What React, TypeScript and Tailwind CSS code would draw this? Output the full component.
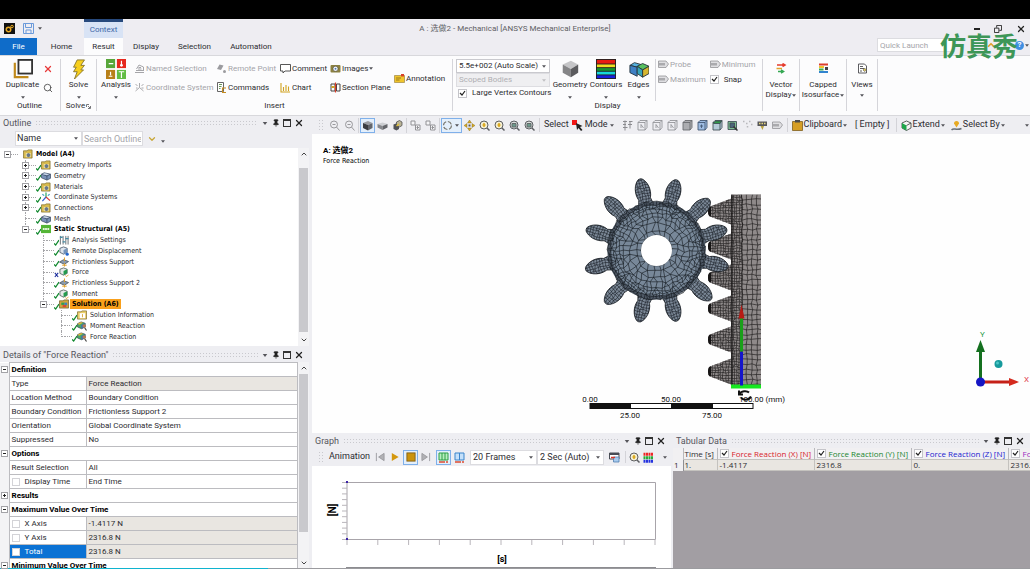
import { useState, type ReactNode } from "react";
import { ChevronDown, Pin, Search, X } from "lucide-react";

type IconProps = { name: string; className?: string };

const svgs: Record<string, ReactNode> = {
  duplicate: (
    <>
      <path d="M2 4v16h15" fill="none" stroke="#c08a1c" strokeWidth="2.4" />
      <rect x="6" y="1" width="15" height="15" fill="#fff" stroke="#333" strokeWidth="2" />
    </>
  ),
  bolt: <path d="M9 1h8l-4 6h4l-4 5h3L6 22l3-8H5l3-5H5z" fill="#f7cf1d" stroke="#86742a" strokeWidth="1" />,
  analysis: (
    <>
      <rect x="0" y="0" width="10" height="10" fill="#58a63a" />
      <rect x="12" y="0" width="10" height="10" fill="#e6281e" />
      <rect x="0" y="12" width="10" height="10" fill="#b8801a" />
      <rect x="12" y="12" width="10" height="10" fill="#63bd45" />
      <path d="M3 5h5M17 2v5M3 19h4M5 14v4M14 14h6M17 14v7" stroke="#fff" strokeWidth="1.3" />
      <circle cx="17" cy="7" r="1.6" fill="#fff" />
    </>
  ),
  geometry: (
    <>
      <path d="M3 6 12 2l8 4-8 5z" fill="#c5c5c7" />
      <path d="M3 6v9l9 5v-9z" fill="#858587" />
      <path d="M20 6v9l-8 5v-9z" fill="#5b5b5e" />
    </>
  ),
  contours: (
    <>
      <rect width="22" height="22" fill="#222" />
      <path d="M1 3h20" stroke="#e81c12" strokeWidth="4" />
      <path d="M1 7.5h20" stroke="#f0e021" strokeWidth="3" />
      <path d="M1 11.5h20" stroke="#17952f" strokeWidth="3" />
      <path d="M1 15.5h20" stroke="#17d7dc" strokeWidth="3" />
      <path d="M1 19.5h20" stroke="#1820dd" strokeWidth="3" />
    </>
  ),
  edges: (
    <g stroke="#26353e" strokeWidth="1">
      <path d="m1 7 5-3 7 2-4 3z" fill="#55b0dc" />
      <path d="M1 7v8l8 4V9z" fill="#3f80c4" />
      <path d="m9 8 6-3 7 3-7 4z" fill="#58c060" />
      <path d="M9 8v8l6 4v-8z" fill="#36a5b8" />
      <path d="m15 12 7-4v8l-7 4z" fill="#d7b62e" />
    </g>
  ),
  tag: (
    <g fill="none" stroke="#9b9b9f" strokeWidth="1.8">
      <path d="M2 19h18M4 15h14M5 12l5-8 9 4v8" />
      <path d="M9 9h5M8 12h7" />
    </g>
  ),
  axes: (
    <g fill="none" stroke="#a1a1a5" strokeWidth="1.8">
      <path d="M11 11V2M11 11 3 18M11 11l8 7M3 4l4 4M19 4l-4 4M4 12h3M15 12h4" />
    </g>
  ),
  remote: (
    <g fill="#9b9b9f">
      <path d="m2 12 5-9 8 2-5 9z" />
      <circle cx="17" cy="17" r="3" />
    </g>
  ),
  commands: (
    <g fill="none" strokeWidth="1.8">
      <path d="M3 1h12v18H3z" fill="#fff" stroke="#555" />
      <path d="M6 5h6M6 9h5M6 13h3" stroke="#5a8b47" />
      <path d="M20 12h-7v9h7" stroke="#c58b20" strokeWidth="2.2" />
    </g>
  ),
  comment: <path d="M1 3h20v13H10l-4 4v-4H1z" fill="#fff" stroke="#444" strokeWidth="1.8" />,
  chart: <path d="M2 2v18h18M7 18v-8M12 18V6M17 18v-9" fill="none" stroke="#d0a220" strokeWidth="2.2" />,
  images: (
    <>
      <rect x="1" y="4" width="20" height="15" rx="2" fill="#8b8141" />
      <circle cx="11" cy="11.5" r="5" fill="#fff" stroke="#333" />
      <circle cx="11" cy="11.5" r="2" fill="#4c77b2" />
    </>
  ),
  section: (
    <>
      <path d="M2 4h8v14H2zM13 4h7v14h-7z" fill="none" stroke="#444" strokeWidth="2" />
      <path d="M11 1v20" stroke="#dc3e28" strokeWidth="2.4" />
      <path d="M3 10h6" stroke="#d0a220" strokeWidth="4" />
    </>
  ),
  annotation: (
    <>
      <path d="M1 5h20v14H1z" fill="#f0c52c" stroke="#7e6720" />
      <path d="M4 10h10M4 14h7" stroke="#7b6219" strokeWidth="1.5" />
      <path d="M14 2h6v5h-6z" fill="#d8412a" />
    </>
  ),
  probe: (
    <>
      <path d="M1 4h15l5 6-5 7H1z" fill="#dedee1" stroke="#8d8d91" strokeWidth="1.5" />
      <path d="M4 8v5M8 8v5M12 8v5" stroke="#77777b" strokeWidth="2" />
    </>
  ),
  vector: (
    <g fill="none" strokeWidth="3">
      <path d="M2 4h14m-3-3 5 3-5 3" stroke="#e53b2c" />
      <path d="M1 11h11" stroke="#e2a32b" />
      <path d="M4 17h9m-3-3 5 3-5 3" stroke="#35a853" />
    </g>
  ),
  isosurface: (
    <>
      <path d="M2 3h18" stroke="#dc3d2c" strokeWidth="4" />
      <path d="M2 8h10" stroke="#f0c32b" strokeWidth="4" />
      <path d="M2 13h9" stroke="#3baa54" strokeWidth="4" />
      <path d="M2 18h18" stroke="#3284cf" strokeWidth="4" />
      <path d="M14 8h6v6h-6z" fill="#444" />
    </>
  ),
  views: (
    <g fill="#fff" stroke="#4b4b4f" strokeWidth="1.8">
      <path d="M3 2h12l4 4v14H3z" />
      <path d="M6 7h6M6 11h8M6 16h4" />
      <path d="m12 14 3-4 4 4-4 3z" fill="#d9c25a" strokeWidth="1" />
    </g>
  ),
  zoom: (
    <g fill="none" stroke="#99999d" strokeWidth="2">
      <circle cx="10" cy="9" r="7" />
      <path d="m15 14 6 7M7 9h6" />
    </g>
  ),
  zoomBox: (
    <g fill="none" stroke="#5d5f63" strokeWidth="2">
      <circle cx="10" cy="10" r="8" fill="#f5efd2" />
      <path d="m16 16 5 5" strokeWidth="3" />
      <path d="M7 10h6M10 6v8" stroke="#d9a617" strokeWidth="3" />
    </g>
  ),
  zoomFit: (
    <g fill="none" stroke="#5d5f63" strokeWidth="2">
      <circle cx="10" cy="10" r="8" fill="#d9dfdd" />
      <path d="m16 16 5 5" strokeWidth="3" />
      <path d="M6 7h8v7H6z" fill="#6c9a8b" stroke="#63696a" />
    </g>
  ),
  solid: (
    <>
      <path d="m2 6 10-4 9 4-9 4z" fill="#9a9ca1" />
      <path d="M2 6v10l10 5V10z" fill="#3b3d42" />
      <path d="m21 6-9 4v11l9-5z" fill="#63666c" />
    </>
  ),
  plate: (
    <>
      <path d="m1 8 10-3 10 3-10 4z" fill="#ccced2" />
      <path d="M1 8v7l10 5v-8z" fill="#85878c" />
      <path d="m21 8-10 4v8l10-5z" fill="#63656a" />
    </>
  ),
  rotateBox: (
    <>
      <path d="M3 9 8 7l6 3v8l-5 3-6-3z" fill="#505257" />
      <path d="m9 4 6-3 5 3v7l-5 3-6-3z" fill="#b9b396" stroke="#4c4c4c" strokeWidth="1.5" />
      <path d="m9 12 5-4" stroke="#e0bd35" strokeWidth="3" />
    </>
  ),
  copyBox: (
    <g fill="#f5f5f7" stroke="#929296" strokeWidth="2">
      <path d="M2 2h8v8H2zM11 10h9v10h-9z" />
      <path d="M13 15h5M15 12v6" />
    </g>
  ),
  rotate: <circle cx="11" cy="11" r="8" fill="none" stroke="#75736a" strokeWidth="2.4" strokeDasharray="9 3.5" />,
  pan: (
    <>
      <path d="m11 0 4 6H7zM11 22l4-6H7zM0 11l6-4v8zM22 11l-6-4v8z" fill="#d9a91a" stroke="#7b6828" strokeWidth=".8" />
      <path d="M9 9h4v4H9z" fill="#555" />
    </>
  ),
  mode: (
    <>
      <path d="M0 0h10v10H0z" fill="#f01616" />
      <path d="m8 6 13 6-5 2 5 6-3 2-5-6-3 4z" fill="#222" />
    </>
  ),
  selectGrid: (
    <g fill="none" stroke="#8b8b8f" strokeWidth="2">
      <path d="M2 3h8M14 3h7M2 9h6M12 9h8M2 15h9M6 1v20M16 3v14" />
    </g>
  ),
  cubeLine: (
    <g fill="none" stroke="#8f9095" strokeWidth="1.7">
      <path d="M2 5 6 1h14v14l-4 5H2zM2 5h14v15M16 5l4-4" />
      <path d="m8 9 5 7M8 9v7" />
    </g>
  ),
  cubeDark: (
    <g fill="#acadb1" stroke="#67686d" strokeWidth="1.7">
      <path d="M2 5 6 1h14v14l-4 5H2zM2 5h14v15M16 5l4-4" />
    </g>
  ),
  cubeBlue: (
    <g fill="#9dbbe2" stroke="#3f536f" strokeWidth="1.7">
      <path d="M2 5 6 1h14v14l-4 5H2zM2 5h14v15M16 5l4-4M6 12h6M9 9v7" />
    </g>
  ),
  cubeGreen: (
    <g fill="#b5cbd9" stroke="#3d4c54" strokeWidth="1.7">
      <path d="M2 5 6 1h14v14l-4 5H2zM2 5h14v15M16 5l4-4" />
      <path d="M3 6 7 2h12l-3 5H3z" fill="#309b4a" />
    </g>
  ),
  cubeMesh: (
    <g fill="#7dbf93" stroke="#3d4c54" strokeWidth="1.7">
      <path d="M2 3h17v16H2z" />
      <path d="M6 6h9v9H6z" fill="#4b657a" />
      <path d="m13 13 8 8" stroke="#333" strokeWidth="3" />
    </g>
  ),
  dots: <path d="M2 3h3M8 7h3M14 3h3M11 12v3M18 9h3" stroke="#b8b8bc" strokeWidth="3" />,
  label: (
    <>
      <path d="M1 3h19v9H1z" fill="#57575a" />
      <path d="m7 12 4 8 3-8" fill="#b9a23f" />
      <path d="M4 7h3M9 7h3M14 7h3" stroke="#e6d780" strokeWidth="3" />
    </>
  ),
  clipboard: (
    <>
      <path d="M1 3h20v18H1z" fill="#d69e24" stroke="#795816" strokeWidth="1.5" />
      <path d="M6 0h10v5H6z" fill="#4d4d4d" />
    </>
  ),
  extend: (
    <>
      <path d="m2 6 9-4 9 4v10l-9 5-9-5z" fill="#f5f5f5" stroke="#3d4440" strokeWidth="1.7" />
      <path d="m2 6 9 5v10l-9-5z" fill="#1da64a" />
      <path d="m11 11 9-5" stroke="#3d4440" strokeWidth="1.7" />
    </>
  ),
  selectBy: (
    <>
      <path d="M11 15 6 7a5 5 0 1 1 10 0z" fill="#e7aa23" />
      <path d="M1 20c5-6 8 2 20-3" fill="none" stroke="#68707a" strokeWidth="3" />
    </>
  ),
  folder: (
    <>
      <path d="M1 4h8l2-2h9v18H1z" fill="#d8bb50" stroke="#816e2b" strokeWidth="1.6" />
      <path d="M6 9h11v9H6z" fill="#f6e7a7" />
      <path d="m8 11 4-2 4 2v5l-4 2-4-2z" fill="#67778a" />
    </>
  ),
  part: (
    <>
      <path d="m1 7 6-3 14 3v9l-8 4-12-5z" fill="#7891b8" stroke="#384860" strokeWidth="1.6" />
      <path d="m1 7 12 4 8-4M13 11v9" fill="none" stroke="#384860" strokeWidth="1.6" />
      <path d="m3 7 5-2 10 2-5 2z" fill="#d5dfef" />
    </>
  ),
  csys: (
    <g fill="none" strokeWidth="2.6">
      <path d="M11 11V1" stroke="#28a55b" />
      <path d="M11 11 3 20" stroke="#3462cf" />
      <path d="m11 11 9 8" stroke="#da3836" />
      <path d="m3 5 4 3M19 5l-4 3" stroke="#3da1c5" />
    </g>
  ),
  static: (
    <>
      <rect y="2" width="22" height="18" fill="#54b536" />
      <path d="M4 11h14" stroke="#e3f4dc" strokeWidth="4" strokeDasharray="4 1" />
    </>
  ),
  settings: (
    <g stroke="#4e565c" strokeWidth="1.8">
      <path d="M3 2v19M9 2v19M15 2v19M20 2v19" />
      <path d="M2 5h6M8 15h6M14 8h7" stroke="#428aa3" strokeWidth="3" />
    </g>
  ),
  displacement: (
    <>
      <path d="m2 5 8-3 8 3v9l-8 4-8-4z" fill="#dee5ee" stroke="#4c596a" strokeWidth="1.8" />
      <path d="m10 9 8-4v9l-8 4z" fill="#7594bb" />
      <circle cx="18" cy="18" r="3.5" fill="#2467ce" />
    </>
  ),
  support: (
    <>
      <path d="m1 11 9-5 11 4-9 6z" fill="#8b9cae" stroke="#46525f" strokeWidth="1.7" />
      <path d="M12 1v8M12 14v7M7 18h10" stroke="#e0a02b" strokeWidth="2.2" />
    </>
  ),
  force: (
    <>
      <path d="m2 5 8-3 8 3v9l-8 4-8-4z" fill="#e6e9e8" stroke="#52605c" strokeWidth="1.8" />
      <path d="m10 9 8-4v9l-8 4z" fill="#249b4d" />
      <path d="m14 19 3 2 4-4" fill="none" stroke="#e0a02b" strokeWidth="2" />
    </>
  ),
  solution: (
    <>
      <path d="M1 4h8l2-2h10v18H1z" fill="#d0a63e" stroke="#75602d" strokeWidth="1.6" />
      <path d="M5 8h7v5H5z" fill="#2f9e50" />
      <path d="M12 8h6v6h-6z" fill="#3d83c1" />
      <path d="M8 13h8v5H8z" fill="#d84c35" />
    </>
  ),
  reaction: (
    <>
      <path d="m1 6 8-4 9 3v8l-8 4-9-4z" fill="#46a866" stroke="#36434c" strokeWidth="1.5" />
      <path d="m9 9 9-4v8l-8 4z" fill="#426fb3" />
      <path d="m1 6 8-4 4 2-8 4z" fill="#dfb13c" />
      <circle cx="16" cy="11" r="4" fill="#b77b52" />
      <path d="m17 15 4 6" stroke="#444" strokeWidth="2.5" />
    </>
  ),
  page: (
    <>
      <path d="M1 4h8l2-2h10v18H1z" fill="#e9ce69" stroke="#816e2b" strokeWidth="1.6" />
      <path d="M6 7h12v11H6z" fill="#fff" />
      <path d="M12 9v7" stroke="#d6a52c" strokeWidth="2" />
    </>
  ),
  prev: <path d="M3 2v18M20 3v16L8 11z" fill="#b1b1b5" stroke="#9b9b9f" strokeWidth="2" />,
  play: <path d="m4 2 15 9L4 20z" fill="#d4980f" />,
  stop: <rect x="2" y="2" width="18" height="18" fill="#cb930d" stroke="#806119" strokeWidth="2" />,
  next: <path d="M19 2v18M2 3v16l12-8z" fill="#b1b1b5" stroke="#9b9b9f" strokeWidth="2" />,
  greenBars: (
    <>
      <path d="M2 2h18v14H2zM8 2v14M14 2v14" fill="#b9efbf" stroke="#2d9e45" strokeWidth="2" />
      <path d="M2 20h12M16 20h4" stroke="#dc4b32" strokeWidth="3" />
    </>
  ),
  blueBars: (
    <>
      <path d="M2 2h18v14H2zM11 2v14" fill="#c4e0fa" stroke="#3b85cc" strokeWidth="2" />
      <path d="M2 20h12M16 20h4" stroke="#dc4b32" strokeWidth="3" />
    </>
  ),
  exportVideo: (
    <>
      <path d="M1 2h19v12H1z" fill="#fff" stroke="#484c55" strokeWidth="2" />
      <path d="M1 4h19" stroke="#484c55" strokeWidth="4" />
      <path d="M9 10h11v10H9z" fill="#a8cbee" stroke="#4b79ac" strokeWidth="1.5" />
      <path d="M4 11h8" stroke="#d8382b" strokeWidth="3" />
    </>
  ),
  palette: (
    <g strokeWidth="3" strokeDasharray="4 1">
      <path d="M1 3h20M1 6h20" stroke="#ef2727" />
      <path d="M1 10h20M1 13h20" stroke="#28ad37" />
      <path d="M1 17h20M1 20h20" stroke="#2533df" />
    </g>
  ),
};

function Icon({ name, className = "size-[11px]" }: IconProps) {
  return (
    <svg viewBox="0 0 22 22" className={`shrink-0 ${className}`} aria-hidden="true">
      {svgs[name]}
    </svg>
  );
}

function Caret({ className = "" }: { className?: string }) {
  return (
    <svg viewBox="0 0 6 4" className={`h-[3px] w-1 shrink-0 ${className}`} aria-hidden="true">
      <path d="M0 0h6L3 4z" fill="#55555a" />
    </svg>
  );
}

function Divider() {
  return <div className="mx-px w-px self-stretch bg-[#d5d5da]" />;
}

function BigButton({ icon, label, className = "" }: { icon: string; label: string; className?: string }) {
  return (
    <button className={`flex flex-col items-center ${className}`}>
      <Icon name={icon} className="size-5" />
      <span className="leading-[11px]">{label}</span>
      <Caret className="mt-1.5" />
    </button>
  );
}

function SmallButton({ icon, label, muted, menu }: { icon: string; label: string; muted?: boolean; menu?: boolean }) {
  return (
    <button disabled={muted} className="flex h-[11px] items-center gap-px whitespace-nowrap disabled:text-[#a4a4a9]">
      <Icon name={icon} />
      {label}
      {menu && <Caret />}
    </button>
  );
}

function GroupLabel({ children }: { children: ReactNode }) {
  return <div className="flex items-end justify-center leading-[10px]">{children}</div>;
}

function Ribbon() {
  const [contours, setContours] = useState(true);
  const [snap, setSnap] = useState(true);

  return (
    <section className="flex h-[61px] shrink-0 border-y border-[#d8d8dc] bg-[#fcfcfd] pt-[3px] pb-1">
      <div className="flex w-[59px] flex-col">
        <div className="flex flex-1 items-start gap-0.5 pl-1">
          <BigButton icon="duplicate" label="Duplicate" className="w-[37px]" />
          <div className="flex flex-col items-center gap-[9px] pt-[5px]">
            <button aria-label="Delete">
              <X className="size-2.5 text-[#e83a3a]" strokeWidth={3} />
            </button>
            <button aria-label="Find">
              <Search className="size-2.5 text-[#444]" />
            </button>
          </div>
        </div>
        <GroupLabel>Outline</GroupLabel>
      </div>
      <Divider />
      <div className="flex w-[33px] flex-col">
        <div className="flex flex-1 items-start justify-center">
          <BigButton icon="bolt" label="Solve" />
        </div>
        <GroupLabel>
          Solve
          <svg viewBox="0 0 5 5" className="mb-0.5 ml-px size-[5px]" fill="none" stroke="#77777b">
            <path d="M.5 3V.5H3M2 2l2 2M4.500 2v2.500H2" />
          </svg>
        </GroupLabel>
      </div>
      <Divider />
      <div className="flex w-[353px] flex-col">
        <div className="flex flex-1 items-start">
          <BigButton icon="analysis" label="Analysis" className="w-[36px]" />
          <div className="flex flex-1 gap-1 pt-1">
            <div className="flex w-[78px] flex-col gap-2">
              <SmallButton icon="tag" label="Named Selection" muted />
              <SmallButton icon="axes" label="Coordinate System" muted />
            </div>
            <div className="flex w-[60px] flex-col gap-2">
              <SmallButton icon="remote" label="Remote Point" muted />
              <SmallButton icon="commands" label="Commands" />
            </div>
            <div className="flex w-[46px] flex-col gap-2">
              <SmallButton icon="comment" label="Comment" />
              <SmallButton icon="chart" label="Chart" />
            </div>
            <div className="flex w-[60px] flex-col gap-2">
              <SmallButton icon="images" label="Images" menu />
              <SmallButton icon="section" label="Section Plane" />
            </div>
            <div className="pt-2.5">
              <SmallButton icon="annotation" label="Annotation" />
            </div>
          </div>
        </div>
        <GroupLabel>Insert</GroupLabel>
      </div>
      <Divider />
      <div className="flex w-[307px] flex-col">
        <div className="flex flex-1 items-start">
          <div className="flex w-[96px] flex-col pl-0.5">
            <div className="relative">
              <select
                aria-label="Result scale"
                className="h-[14px] w-full appearance-none border border-[#c9c9ce] bg-white px-0.5 leading-[12px]"
              >
                <option>5.5e+002 (Auto Scale)</option>
              </select>
              <Caret className="absolute top-1.5 right-1" />
            </div>
            <div className="relative">
              <select
                aria-label="Scoping"
                disabled
                className="h-[14px] w-full appearance-none border border-[#dddde1] bg-[#efeff1] px-0.5 leading-[12px] text-[#b0b0b4] opacity-100"
              >
                <option>Scoped Bodies</option>
              </select>
              <Caret className="absolute top-1.5 right-1 opacity-30" />
            </div>
            <label className="flex items-center gap-[5px] pl-0.5 leading-[12px] whitespace-nowrap">
              <Tick checked={contours} onChange={setContours} />
              Large Vertex Contours
            </label>
          </div>
          <div className="flex pl-0.5">
            <BigButton icon="geometry" label="Geometry" className="w-[36px]" />
            <BigButton icon="contours" label="Contours" className="w-[36px]" />
            <BigButton icon="edges" label="Edges" className="w-[29px]" />
          </div>
          <div className="mx-0.5 h-[42px] w-px bg-[#d5d5da]" />
          <div className="flex flex-col gap-1">
            <SmallButton icon="probe" label="Probe" muted />
            <SmallButton icon="probe" label="Maximum" muted />
          </div>
          <div className="flex flex-col gap-1 pl-1">
            <SmallButton icon="probe" label="Minimum" muted />
            <label className="flex h-[11px] items-center gap-[5px]">
              <Tick checked={snap} onChange={setSnap} />
              Snap
            </label>
          </div>
        </div>
        <GroupLabel>Display</GroupLabel>
      </div>
      <Divider />
      <TallButton icon="vector" lines={["Vector", "Display"]} className="w-[34px]" />
      <Divider />
      <TallButton icon="isosurface" lines={["Capped", "Isosurface"]} className="w-[44px]" />
      <Divider />
      <TallButton icon="views" lines={["Views", ""]} className="w-[28px]" />
      <Divider />
    </section>
  );
}

function TallButton({ icon, lines, className }: { icon: string; lines: string[]; className: string }) {
  return (
    <button className={`flex flex-col items-center pt-1 leading-[10px] whitespace-nowrap ${className}`}>
      <Icon name={icon} />
      <span className="mt-1.5">{lines[0]}</span>
      <span className="flex h-2.5 items-center gap-px">
        {lines[1]}
        <Caret />
      </span>
    </button>
  );
}

function Tick({ checked, onChange, label }: { checked: boolean; onChange: (v: boolean) => void; label?: string }) {
  return (
    <span className="relative flex size-[9px] shrink-0">
      <input
        type="checkbox"
        aria-label={label}
        checked={checked}
        onChange={(e) => onChange(e.target.checked)}
        className="size-[9px] appearance-none border border-[#c4c4c9] bg-white"
      />
      {checked && (
        <svg viewBox="0 0 9 9" className="pointer-events-none absolute inset-0 size-[9px]">
          <path d="m2 4 2 2 3-4" fill="none" stroke="#222" strokeWidth="1.2" />
        </svg>
      )}
    </span>
  );
}

function PanelHeader({ title }: { title: string }) {
  return (
    <header className="flex h-[14px] shrink-0 items-center gap-1 bg-[#eeeef2] pr-[5px] pl-[3px] text-[#55555c]">
      <h2 className="text-[9px] leading-[14px] whitespace-nowrap">{title}</h2>
      <div className="h-[6px] flex-1 bg-[radial-gradient(#c9c9ce_1px,transparent_1px)] bg-[length:3px_3px]" />
      <div className="flex items-center gap-[3px] text-[#222]">
        <button aria-label={`${title} menu`} className="mr-px">
          <Caret className="w-1.5" />
        </button>
        <button aria-label={`Pin ${title}`}>
          <Pin className="size-2 fill-current" />
        </button>
        <button aria-label={`Maximize ${title}`} className="size-2 border border-t-2 border-[#333]" />
        <button aria-label={`Close ${title}`}>
          <X className="size-2.5" strokeWidth={3} />
        </button>
      </div>
    </header>
  );
}

type TreeNode = {
  label: string;
  level: number;
  icon: string;
  toggle?: "+" | "-";
  state?: "ok" | "off";
  last?: boolean;
};

const tree: TreeNode[] = [
  { label: "Model (A4)", level: 0, icon: "folder", toggle: "-" },
  { label: "Geometry Imports", level: 1, icon: "folder", toggle: "+", state: "ok" },
  { label: "Geometry", level: 1, icon: "part", toggle: "+", state: "ok" },
  { label: "Materials", level: 1, icon: "folder", toggle: "+", state: "ok" },
  { label: "Coordinate Systems", level: 1, icon: "csys", toggle: "+", state: "ok" },
  { label: "Connections", level: 1, icon: "folder", toggle: "+", state: "ok" },
  { label: "Mesh", level: 1, icon: "part", state: "ok" },
  { label: "Static Structural (A5)", level: 1, icon: "static", toggle: "-", state: "ok", last: true },
  { label: "Analysis Settings", level: 2, icon: "settings", state: "ok" },
  { label: "Remote Displacement", level: 2, icon: "displacement", state: "ok" },
  { label: "Frictionless Support", level: 2, icon: "support", state: "ok" },
  { label: "Force", level: 2, icon: "force", state: "off" },
  { label: "Frictionless Support 2", level: 2, icon: "support", state: "ok" },
  { label: "Moment", level: 2, icon: "force", state: "ok" },
  { label: "Solution (A6)", level: 2, icon: "solution", toggle: "-", state: "ok", last: true },
  { label: "Solution Information", level: 3, icon: "page", state: "ok" },
  { label: "Moment Reaction", level: 3, icon: "reaction", state: "ok" },
  { label: "Force Reaction", level: 3, icon: "reaction", state: "ok", last: true },
];

const indents = ["pl-1", "pl-[22px]", "pl-10", "pl-[58px]"];
const guides = ["left-[7px]", "left-[25px]", "left-[43px]", "left-[61px]"];

function Toggle({ sign, label }: { sign: "+" | "-"; label: string }) {
  return (
    <button
      aria-label={label}
      className="relative z-10 flex size-[7px] shrink-0 items-center justify-center border border-[#a3a3a7] bg-white"
    >
      <svg viewBox="0 0 5 5" className="size-[5px] shrink-0">
        <path d={sign === "+" ? "M1 2.5h3M2.5 1v3" : "M1 2.5h3"} stroke="#222" />
      </svg>
    </button>
  );
}

function TreeRow({ node }: { node: TreeNode }) {
  const bold = node.label.endsWith(")");
  const selected = node.icon === "solution";

  return (
    <li className={`relative flex min-h-0 flex-1 items-center ${indents[node.level]}`}>
      {node.level > 0 && (
        <span
          className={`absolute top-0 border-l border-dotted border-[#a5a5a8] ${guides[node.level]} ${
            node.last ? "h-1/2" : "h-full"
          }`}
        />
      )}
      {node.toggle ? (
        <Toggle sign={node.toggle} label={`Toggle ${node.label}`} />
      ) : (
        <span className="ml-[3px] w-1 border-t border-dotted border-[#a5a5a8]" />
      )}
      <span className="w-[7px] border-t border-dotted border-[#a5a5a8]" />
      <svg viewBox="0 0 6 8" className="mt-1 h-[7px] w-[5px] shrink-0">
        {node.state === "ok" && <path d="m0 5 2 2 4-6" fill="none" stroke="#12892f" strokeWidth="1.5" />}
        {node.state === "off" && <path d="m1 2 4 5M5 2 1 7" fill="none" stroke="#1a2d9c" strokeWidth="1.3" />}
      </svg>
      <Icon name={node.icon} className="size-2.5" />
      <span
        className={`ml-px px-0.5 leading-[10px] whitespace-nowrap ${bold ? "font-bold text-black" : ""} ${
          selected ? "bg-[#f9a01b]" : ""
        }`}
      >
        {node.label}
      </span>
    </li>
  );
}

function ScrollBar({ thumb }: { thumb: string }) {
  return (
    <div className="flex w-[11px] shrink-0 flex-col items-center bg-[#f3f3f5] text-[#444]">
      <ChevronDown className="my-0.5 size-2 rotate-180" strokeWidth={3} />
      <div className={`w-[9px] bg-[#c9c9cd] ${thumb}`} />
      <div className="flex-1" />
      <ChevronDown className="mb-0.5 size-2" strokeWidth={3} />
    </div>
  );
}

function OutlinePanel() {
  const [query, setQuery] = useState("");

  return (
    <section className="flex flex-col">
      <PanelHeader title="Outline" />
      <div className="flex h-[18px] items-center bg-[#eeeef2] pb-px pl-[15px]">
        <div className="relative">
          <select
            aria-label="Search by"
            className="h-[15px] w-[67px] appearance-none border border-[#dcdce0] bg-white px-px text-[9px] leading-[13px]"
          >
            <option>Name</option>
          </select>
          <Caret className="absolute top-1.5 right-1" />
        </div>
        <input
          aria-label="Search Outline"
          placeholder="Search Outline"
          value={query}
          onChange={(e) => setQuery(e.target.value)}
          className="h-[15px] w-[61px] border border-[#dcdce0] bg-white px-px text-[9px] placeholder:text-[#a5a5aa]"
        />
        <button aria-label="Next match" className="ml-1">
          <ChevronDown className="size-2.5 text-[#c8a637]" strokeWidth={3} />
        </button>
        <button aria-label="Outline options" className="mt-1.5 ml-1">
          <Caret />
        </button>
      </div>
      <div className="flex h-[198px] bg-white">
        <ul className="flex flex-1 flex-col pt-px pb-1 font-['DejaVu_Sans_Condensed','Noto_Sans',sans-serif] text-[7px]">
          {tree.map((node) => (
            <TreeRow key={node.label} node={node} />
          ))}
        </ul>
        <ScrollBar thumb="mt-2 h-[164px]" />
      </div>
    </section>
  );
}

type Detail = { name: string; value?: string; sign?: "+" | "-"; box?: boolean; fixed?: boolean; active?: boolean };

const details: Detail[] = [
  { name: "Definition", sign: "-" },
  { name: "Type", value: "Force Reaction", fixed: true },
  { name: "Location Method", value: "Boundary Condition" },
  { name: "Boundary Condition", value: "Frictionless Support 2" },
  { name: "Orientation", value: "Global Coordinate System" },
  { name: "Suppressed", value: "No" },
  { name: "Options", sign: "-" },
  { name: "Result Selection", value: "All" },
  { name: "Display Time", value: "End Time", box: true },
  { name: "Results", sign: "+" },
  { name: "Maximum Value Over Time", sign: "-" },
  { name: "X Axis", value: "-1.4117 N", box: true, fixed: true },
  { name: "Y Axis", value: "2316.8 N", box: true, fixed: true },
  { name: "Total", value: "2316.8 N", box: true, fixed: true, active: true },
  { name: "Minimum Value Over Time", sign: "-" },
];

function DetailsPanel() {
  return (
    <section className="flex min-h-0 flex-1 flex-col">
      <PanelHeader title={'Details of "Force Reaction"'} />
      <div className="flex min-h-0 flex-1 bg-white">
        <div className="min-w-0 flex-1 overflow-hidden">
          <table className="w-full table-fixed border-collapse">
            <colgroup>
              <col className="w-[9px]" />
              <col className="w-[77px]" />
              <col />
            </colgroup>
            <tbody>
              {details.map((row) => (
                <tr key={row.name} className="h-[14px]">
                  <td className="bg-[#f3f3f5] p-0">
                    {row.sign && (
                      <div className="pl-px">
                        <Toggle sign={row.sign} label={`Toggle ${row.name}`} />
                      </div>
                    )}
                  </td>
                  {row.sign ? (
                    <th
                      colSpan={2}
                      className="border border-[#bcbcc0] p-0 pl-0.5 text-left leading-[13px] font-bold text-black"
                    >
                      {row.name}
                    </th>
                  ) : (
                    <>
                      <th
                        className={`border border-[#bcbcc0] p-0 pl-0.5 text-left leading-[13px] font-normal whitespace-nowrap ${
                          row.active ? "bg-[#0b72d4] text-white" : ""
                        }`}
                      >
                        {row.box ? (
                          <label className="flex items-center gap-[5px]">
                            <input
                              type="checkbox"
                              className="size-2 appearance-none border border-[#d3d3d7] bg-white"
                            />
                            {row.name}
                          </label>
                        ) : (
                          row.name
                        )}
                      </th>
                      <td
                        className={`border border-[#bcbcc0] p-0 pl-0.5 leading-[13px] ${row.fixed ? "bg-[#e9e6e1]" : ""}`}
                      >
                        {row.value}
                      </td>
                    </>
                  )}
                </tr>
              ))}
            </tbody>
          </table>
        </div>
        <ScrollBar thumb="h-[158px]" />
      </div>
    </section>
  );
}

const tools = [
  ["zoom", "zoom"],
  ["*solid", "plate", "rotateBox"],
  ["copyBox", "copyBox"],
  ["*rotate", "pan", "zoomBox", "zoomBox", "zoomFit", "zoomFit"],
];

const filters = [
  "selectGrid",
  "cubeLine",
  "cubeLine",
  "cubeLine",
  "cubeDark",
  "cubeBlue",
  "cubeGreen",
  "cubeMesh",
  "dots",
  "label",
  "probe",
];

function Grip() {
  return <div className="h-3 w-1.5 shrink-0 bg-[radial-gradient(#c9c9ce_1px,transparent_1px)] bg-[length:3px_3px]" />;
}

function GraphicsToolbar() {
  return (
    <div className="flex h-[18px] shrink-0 items-center bg-[#eeeef2] pl-[6px] text-[9px] whitespace-nowrap">
      <Grip />
      <div className="flex items-center pl-[3px]">
        {tools.map((group, g) => (
          <div key={g} className={`flex items-center ${g > 0 ? "ml-px border-l border-[#d3d3d8] pl-px" : ""}`}>
            {group.map((item, i) => {
              const active = item.startsWith("*");
              const name = item.replace("*", "");
              return (
                <button
                  key={i}
                  aria-label={name}
                  className={`flex h-[15px] min-w-[15px] items-center justify-center ${
                    active ? "border border-[#7fb0ea] bg-[#e4effb]" : ""
                  }`}
                >
                  <Icon name={name} />
                  {name === "rotate" && <Caret className="mx-0.5" />}
                </button>
              );
            })}
          </div>
        ))}
      </div>
      <div className="ml-0.5 flex items-center border-l border-[#d3d3d8] pl-1">
        <span>Select</span>
        <button className="ml-[3px] flex items-center gap-0.5">
          <Icon name="mode" />
          Mode
          <Caret />
        </button>
      </div>
      <div className="ml-1.5 flex items-center">
        {filters.map((name, i) => (
          <button key={i} aria-label={`Filter ${i + 1}`} className="flex w-[15px] justify-center">
            <Icon name={name} />
          </button>
        ))}
      </div>
      <div className="ml-0.5 flex items-center gap-2 border-l border-[#d3d3d8] pl-1">
        <button className="flex items-center gap-px">
          <Icon name="clipboard" />
          Clipboard
          <Caret />
        </button>
        <button>[ Empty ]</button>
      </div>
      <div className="ml-1.5 flex items-center gap-1.5 border-l border-[#d3d3d8] pl-1">
        <button className="flex items-center gap-px">
          <Icon name="extend" />
          Extend
          <Caret />
        </button>
        <button className="flex items-center gap-px">
          <Icon name="selectBy" />
          Select By
          <Caret />
        </button>
      </div>
      <button aria-label="More tools" className="mr-px ml-auto">
        <Caret />
      </button>
    </div>
  );
}

function rand(i: number) {
  const v = Math.sin(i * 12.9898) * 43758.5453;
  return v - Math.floor(v) - 0.5;
}

// rings of jittered nodes, each node tied to the nearest one on the next ring
function ringMesh(cx: number, cy: number, radii: number[], counts: number[]) {
  let d = "";
  const rings = radii.map((r, j) =>
    Array.from({ length: counts[j] }, (_, i) => {
      const a = ((i + rand(i + j * 97) * 0.7) / counts[j]) * Math.PI * 2;
      const rr = r + (j === 0 ? 0 : rand(i * 3 + j * 31) * 3);
      return [cx + rr * Math.cos(a), cy + rr * Math.sin(a)];
    })
  );
  rings.forEach((ring, j) => {
    d += "M" + ring.map((p) => `${p[0].toFixed(1)} ${p[1].toFixed(1)}`).join("L") + "Z";
    if (j === 0) return;
    const inner = rings[j - 1];
    ring.forEach((p, i) => {
      const q = inner[Math.round((i / ring.length) * inner.length) % inner.length];
      d += `M${p[0].toFixed(1)} ${p[1].toFixed(1)}L${q[0].toFixed(1)} ${q[1].toFixed(1)}`;
    });
  });
  return d;
}

function gridMesh(x0: number, y0: number, x1: number, y1: number, step: number, jitter: number) {
  const cols = Math.ceil((x1 - x0) / step);
  const rows = Math.ceil((y1 - y0) / step);
  const at = (i: number, j: number) =>
    `${(x0 + i * step + rand(i * 7 + j * 53) * jitter).toFixed(1)} ${(y0 + j * step + rand(i * 29 + j * 11) * jitter).toFixed(1)}`;
  let d = "";
  for (let j = 0; j <= rows; j++) {
    for (let i = 0; i <= cols; i++) {
      if (i < cols) d += `M${at(i, j)}L${at(i + 1, j)}`;
      if (j < rows) d += `M${at(i, j)}L${at(i, j + 1)}`;
    }
  }
  return d;
}

const gearMesh = ringMesh(
  656.5,
  250,
  [15.5, 21, 27, 32.5, 37, 40.5, 43.5, 46, 48.5],
  [18, 22, 30, 40, 52, 66, 80, 92, 100]
);
const toothShape = "M44-10Q49-6 53-6C60-9 69-7 73-2Q74 0 73 2C69 7 60 9 53 6Q49 6 44 10Z";
const toothMesh = gridMesh(44, -10, 75, 10, 2.8, 1.4);
const rackTeeth = [211, 246, 277, 308, 339, 371];
const rackShape =
  "M731 194H761V385H731Z" +
  rackTeeth.map((y) => `M731 ${y - 13}L710 ${y - 5}Q708 ${y - 4} 708 ${y}Q708 ${y + 4} 710 ${y + 5}L731 ${y + 13}Z`).join("");
const rackFine = gridMesh(707, 194, 742, 386, 2.7, 1.5);
const rackCoarse = gridMesh(742, 194, 764, 386, 5, 1.8);
const teeth = [-103, -74, -44, -17, 13, 42, 74, 104, 134, 165, 197, 226];

function Scene() {
  return (
    <svg viewBox="312 134 718 298" className="absolute inset-0 size-full" role="img" aria-label="Meshed gear and rack">
      <defs>
        <clipPath id="tooth">
          <path d={toothShape} />
        </clipPath>
        <clipPath id="rack">
          <path d={rackShape} />
        </clipPath>
      </defs>
      <path d={rackShape} fill="#8f8a8a" />
      <g clipPath="url(#rack)" fill="none" stroke="#161414">
        <path d={rackFine} strokeWidth=".6" />
        <path d={rackCoarse} strokeWidth=".6" />
        {rackTeeth.map((y) => (
          <path key={y} d={`M709 ${y - 5}V${y + 5}`} strokeWidth="4" />
        ))}
        <path d="M732 194V385" strokeWidth="2" strokeOpacity=".6" />
      </g>
      {teeth.map((angle) => (
        <g key={angle} transform={`translate(656.5 250) rotate(${angle})`}>
          <path d={toothShape} fill="#7c8998" stroke="#20252b" strokeWidth=".8" />
          <path d={toothMesh} clipPath="url(#tooth)" fill="none" stroke="#10151b" strokeWidth=".5" />
        </g>
      ))}
      <circle cx="656.5" cy="250" r="49" fill="#788899" />
      <circle cx="656.5" cy="250" r="47" fill="none" stroke="#1b2026" strokeOpacity=".45" strokeWidth="4" />
      <path d={gearMesh} fill="none" stroke="#10151b" strokeWidth=".6" />
      <circle cx="656.5" cy="250" r="15.5" fill="#fff" />
      <path d="M731 386h30" stroke="#16e81f" strokeWidth="4" />
      <path d="M741.5 385v-34" stroke="#1414cc" strokeWidth="3" />
      <path d="M741.5 351v-34" stroke="#1aa01a" strokeWidth="3" />
      <path d="m741.5 304 3 14h-6z" fill="#b81a14" />
      <g fontSize="8" textAnchor="middle" fill="#111">
        <text x="590" y="401">0.00</text>
        <text x="671" y="401">50.00</text>
        <text x="762" y="401">100.00 (mm)</text>
        <text x="630" y="417">25.00</text>
        <text x="712" y="417">75.00</text>
      </g>
      <path d="M739 394c2-4 8-4 10-2M739 390v4h4M751 396c-2 4-8 4-10 1" fill="none" stroke="#111" strokeWidth="2" />
      <rect x="590" y="403" width="163" height="5" fill="#fff" stroke="#111" />
      <path d="M590 403h41v5h-41zM671 403h42v5h-42z" fill="#111" />
    </svg>
  );
}

function Triad() {
  return (
    <svg viewBox="0 0 60 62" className="absolute right-0 bottom-[42px] h-[62px] w-[60px]" role="img" aria-label="Axis triad">
      <path d="M10.5 50V22" stroke="#14701f" strokeWidth="3" />
      <path d="m10.5 11 4.5 12H6z" fill="#14701f" />
      <path d="M10 53h32" stroke="#c52018" strokeWidth="3" />
      <path d="m49 53-10-4v8z" fill="#d42a1e" />
      <circle cx="10.5" cy="53" r="4.5" fill="#1515c4" />
      <circle cx="28.5" cy="35" r="4" fill="#169a9c" />
      <circle cx="27.5" cy="34" r="1.5" fill="#4cc5c5" />
      <text x="10" y="8" fontSize="8" fill="#2f9c4a">
        Y
      </text>
      <text x="54" y="53" fontSize="8" fill="#e04050">
        X
      </text>
    </svg>
  );
}

function Viewport() {
  return (
    <div className="relative min-h-0 flex-1 overflow-hidden bg-[#fefefe] pt-[11px] pl-[11px] text-black">
      <div className="leading-[11px] font-bold">A: 选做2</div>
      <div className="font-['DejaVu_Sans_Condensed','Noto_Sans',sans-serif] text-[7px] leading-[11px]">Force Reaction</div>
      <Scene />
      <Triad />
    </div>
  );
}

function GraphPanel() {
  return (
    <section className="flex w-1/2 flex-col">
      <PanelHeader title="Graph" />
      <div className="flex h-[18px] shrink-0 items-center gap-[3px] bg-[#eeeef2] pl-[6px] text-[9px]">
        <Grip />
        <span className="px-0.5">Animation</span>
        <button aria-label="First frame" className="mr-0.5">
          <Icon name="prev" className="size-2.5" />
        </button>
        <button aria-label="Play">
          <Icon name="play" className="size-2.5" />
        </button>
        <button
          aria-label="Stop"
          className="flex size-[15px] items-center justify-center border border-[#7fb0ea] bg-[#e4effb]"
        >
          <Icon name="stop" className="size-2.5" />
        </button>
        <button aria-label="Last frame" className="mr-0.5">
          <Icon name="next" className="size-2.5" />
        </button>
        <button
          aria-label="Distributed"
          className="flex size-[15px] items-center justify-center border border-[#7fb0ea] bg-[#e4effb]"
        >
          <Icon name="greenBars" />
        </button>
        <button aria-label="Result sets" className="mr-0.5">
          <Icon name="blueBars" />
        </button>
        <div className="flex">
          <div className="relative">
            <select aria-label="Frames" className="h-[15px] w-[67px] appearance-none border border-[#dcdce0] bg-white px-0.5">
              <option>20 Frames</option>
            </select>
            <Caret className="absolute top-1.5 right-1" />
          </div>
          <div className="relative">
            <select
              aria-label="Duration"
              className="h-[15px] w-[67px] appearance-none border border-[#dcdce0] bg-white px-0.5"
            >
              <option>2 Sec (Auto)</option>
            </select>
            <Caret className="absolute top-1.5 right-1" />
          </div>
        </div>
        <button aria-label="Export video" className="mx-0.5">
          <Icon name="exportVideo" />
        </button>
        <div className="h-3 w-px bg-[#d3d3d8]" />
        <button aria-label="Zoom to fit">
          <Icon name="zoomBox" />
        </button>
        <button aria-label="Palette">
          <Icon name="palette" />
        </button>
        <Caret className="mr-1 ml-auto" />
      </div>
      <svg viewBox="0 0 359 103" className="min-h-0 w-full flex-1 bg-white" role="img" aria-label="Force over time">
        <path d="M35 16.5h308.5v57H35z" fill="none" stroke="#a8a4aa" />
        {Array.from({ length: 11 }, (_, i) => (
          <path key={i} d={`M${35 + i * 30.8} 74v5`} stroke="#b9b6bb" />
        ))}
        {Array.from({ length: 11 }, (_, i) => (
          <path key={i} d={`M30 ${16.5 + i * 5.7}h5`} stroke="#b9b6bb" />
        ))}
        <path d="M34 15h2v2h-2zM34 72h2v2h-2z" fill="#3b22a8" />
        <text x="24" y="44" transform="rotate(-90 24 44)" textAnchor="middle" fontSize="10" fontWeight="bold">
          [N]
        </text>
        <text x="190" y="96" textAnchor="middle" fontSize="9" fontWeight="bold">
          [s]
        </text>
        <path d="M34 101.5h310" stroke="#8c8c90" />
      </svg>
    </section>
  );
}

const series = [
  { axis: "Force Reaction (X) [N]", value: "-1.4117", color: "text-[#d8242a]" },
  { axis: "Force Reaction (Y) [N]", value: "2316.8", color: "text-[#18852e]" },
  { axis: "Force Reaction (Z) [N]", value: "0.", color: "text-[#2222d0]" },
  { axis: "Force Reaction (Total) [N]", value: "2316.8", color: "text-[#9a2ac0]" },
];

function TabularPanel() {
  const [shown, setShown] = useState([true, true, true, true]);

  return (
    <section className="flex min-w-0 flex-1 flex-col">
      <PanelHeader title="Tabular Data" />
      <div className="min-h-0 flex-1 overflow-hidden bg-[#a29ea3]">
        <table className="w-[432px] table-fixed border-collapse text-left font-['Open_Sans',sans-serif] whitespace-nowrap">
          <colgroup>
            <col className="w-[10px]" />
            <col className="w-[34px]" />
            {series.map((s) => (
              <col key={s.axis} className="w-[97px]" />
            ))}
          </colgroup>
          <thead>
            <tr className="h-[11px] bg-[#f1f0f2]">
              <th className="p-0" />
              <th className="border-x border-[#b9b9bd] p-0 pl-px leading-[11px] font-normal">Time [s]</th>
              {series.map((s, i) => (
                <th key={s.axis} className="overflow-hidden border-x border-[#b9b9bd] p-0 pl-0.5 font-normal">
                  <label className={`flex items-center gap-[3px] leading-[11px] ${s.color}`}>
                    <Tick checked={shown[i]} onChange={(v) => setShown(shown.map((old, k) => (k === i ? v : old)))} />
                    {s.axis}
                  </label>
                </th>
              ))}
            </tr>
          </thead>
          <tbody>
            <tr className="h-[11px] bg-[#e9e6e1]">
              <th className="border-r border-[#8f8f93] bg-[#f1f0f2] p-0 pl-px leading-[10px] font-normal">1</th>
              <td className="border border-[#c4c2be] p-0 pl-px leading-[10px]">1.</td>
              {series.map((s) => (
                <td key={s.axis} className="border border-[#c4c2be] p-0 pl-0.5 leading-[10px]">
                  {s.value}
                </td>
              ))}
            </tr>
          </tbody>
        </table>
      </div>
    </section>
  );
}

function TitleBar() {
  return (
    <header className="flex h-[36px] shrink-0 bg-[#eeedf2]">
      <div className="flex w-[282px] flex-col">
        <div className="flex h-[19px] items-center">
          <div className="flex w-[84px] items-center gap-2 pl-1">
            <svg viewBox="0 0 22 22" className="size-[11px]" aria-hidden="true">
              <rect width="22" height="22" fill="#111" />
              <circle cx="9" cy="13" r="4.5" fill="none" stroke="#e8a923" strokeWidth="3" />
              <circle cx="16" cy="7" r="2.5" fill="none" stroke="#e8a923" strokeWidth="2" />
            </svg>
            <button aria-label="Save">
              <svg viewBox="0 0 22 22" className="size-[11px]" fill="none" stroke="#6b9ada" strokeWidth="2">
                <path d="M1 1h20v20H1zM5 1v8h12V1M6 21v-7h10v7" />
              </svg>
            </button>
            <Caret className="-ml-1" />
          </div>
          <div className="flex h-full w-[39px] items-center justify-center border-t-[3px] border-[#27497c] bg-[#d8e3f5] text-[#3e68a8]">
            Context
          </div>
        </div>
        <nav className="flex h-[17px] items-stretch">
          <button className="w-[37px] bg-[#0f6cc9] text-white">File</button>
          <button className="w-[47px] pl-0.5">Home</button>
          <button className="w-[39px] bg-[#fcfcfd]">Result</button>
          <button className="w-[46px]">Display</button>
          <button className="w-[51px]">Selection</button>
          <button className="w-[62px]">Automation</button>
        </nav>
      </div>
      <h1 className="flex-1 pt-1 text-center leading-[12px] text-[#5e5e64]">
        A : 选做2 - Mechanical [ANSYS Mechanical Enterprise]
      </h1>
      <div className="flex w-[282px] flex-col items-end">
        <div className="flex h-[19px] items-center gap-[14px] pr-1 text-[#222]">
          <button aria-label="Minimize" className="h-0.5 w-1.5 bg-[#222]" />
          <button aria-label="Restore">
            <svg viewBox="0 0 9 9" className="size-2" fill="none" stroke="#222">
              <path d="M.5 3.5h5v5h-5zM3 3V.5h5.500V6H6" />
            </svg>
          </button>
          <button aria-label="Close">
            <X className="size-2.5" strokeWidth={3} />
          </button>
        </div>
        <div className="flex items-center">
          <input
            aria-label="Quick Launch"
            placeholder="Quick Launch"
            className="h-[14px] w-[78px] border border-[#dcdce0] bg-white px-0.5 placeholder:text-[#a5a5aa]"
          />
          <div className="flex w-[75px] items-center justify-end gap-px pr-px">
            <button aria-label="Ribbon options" className="mr-[18px]">
              <ChevronDown className="size-2.5 rotate-180 text-[#e0a02b]" strokeWidth={4} />
            </button>
            <button
              aria-label="Help"
              className="flex size-[9px] items-center justify-center rounded-full bg-[#3f8fe2] font-bold text-white"
            >
              ?
            </button>
            <Caret />
          </div>
        </div>
      </div>
    </header>
  );
}

export default function App() {
  return (
    <main className="relative flex h-screen flex-col overflow-hidden bg-[#eeeef2] font-['Roboto','Noto_Sans_CJK_SC',sans-serif] text-[8px] text-[#2c2c30]">
      <div className="h-[19px] shrink-0 bg-black" />
      <TitleBar />
      <Ribbon />
      <div className="flex min-h-0 flex-1 gap-[3px]">
        <div className="flex w-[309px] shrink-0 flex-col gap-0.5">
          <OutlinePanel />
          <DetailsPanel />
        </div>
        <div className="flex min-w-0 flex-1 flex-col">
          <GraphicsToolbar />
          <Viewport />
          <div className="flex h-[136px] shrink-0 gap-0.5 pt-px">
            <GraphPanel />
            <TabularPanel />
          </div>
        </div>
      </div>
      <div className="absolute top-8 right-3 text-[26px] leading-[30px] font-bold text-[#3d9657]">仿真秀</div>
      <div className="absolute inset-x-0 bottom-0 h-px bg-[#9b9b9f]">
        <div className="h-px w-[26%] bg-[#10b4cf]" />
      </div>
    </main>
  );
}
